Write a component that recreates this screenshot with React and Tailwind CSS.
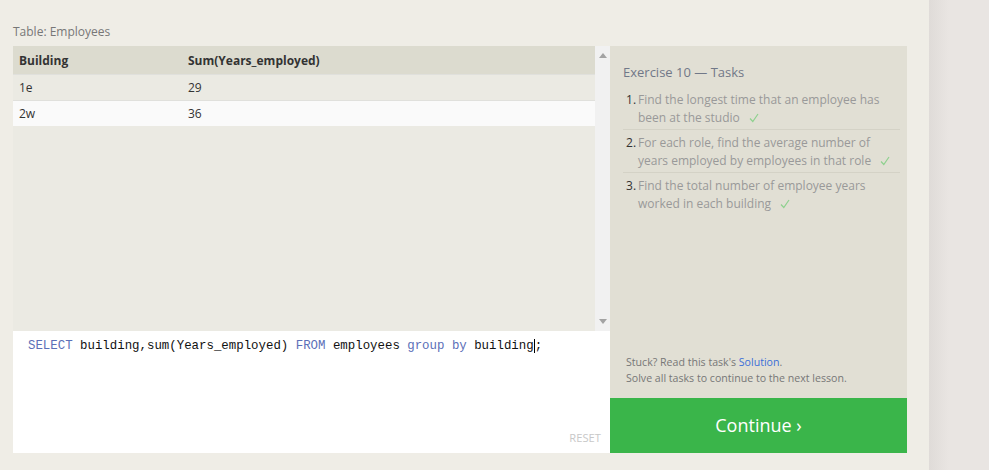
import React from 'react';

const rows = [
  { building: '1e', sum: 29, bg: 'bg-[#ebeae3]' },
  { building: '2w', sum: 36, bg: 'bg-[#fafafa]' },
];

const tasks = [
  'Find the longest time that an employee has been at the studio',
  'For each role, find the average number of years employed by employees in that role',
  'Find the total number of employee years worked in each building',
];

function Check() {
  return (
    <svg className="ml-[9px] inline-block align-[-1px]" width="10" height="10" viewBox="0 0 10 10">
      <path d="M1 5.5L3.8 8.5L9 1" fill="none" stroke="#8fd18f" strokeWidth="1.2" />
    </svg>
  );
}

export default function App() {
  return (
    <div className="flex min-h-[470px] w-full bg-[#efede6] font-['Open_Sans',sans-serif]">
      <div className="w-[929px] shrink-0 pl-[13px] pr-[22px]">
        <div className="pt-[23px] text-[12px] leading-[18px] text-[#777]">Table: Employees</div>
        <div className="mt-[5px] flex">
          {/* left column: results + editor */}
          <div className="flex w-[597px] flex-col">
            <div className="flex h-[285px] bg-[#ebeae3]">
              <div className="flex-1">
                <div className="flex h-[28px] items-center bg-[#dcdbcf] pt-[2px] text-[12px] font-bold text-[#333]">
                  <div className="w-[175px] pl-[6px]">Building</div>
                  <div>Sum(Years_employed)</div>
                </div>
                {rows.map(r => (
                  <div
                    key={r.building}
                    className={`flex h-[26px] items-center border-t border-[#e0e0dc] text-[12px] text-[#333] ${r.bg}`}
                  >
                    <div className="w-[175px] pl-[6px]">{r.building}</div>
                    <div>{r.sum}</div>
                  </div>
                ))}
              </div>
              <div className="flex w-[15px] flex-col items-center justify-between bg-[#f1f1f1] py-[7px]">
                <svg width="8" height="5" viewBox="0 0 8 5"><path d="M4 0L8 5H0z" fill="#a3a3a3" /></svg>
                <svg width="8" height="5" viewBox="0 0 8 5"><path d="M0 0H8L4 5z" fill="#a3a3a3" /></svg>
              </div>
            </div>
            <div className="relative h-[122px] bg-white pl-[15px] pt-[6px] font-['Liberation_Mono',monospace] text-[12.4px] leading-[18px]">
              <span className="text-[#5b6fb8]">SELECT</span>{' '}
              <span className="text-[#111]">building,sum(Years_employed)</span>{' '}
              <span className="text-[#5b6fb8]">FROM</span>{' '}
              <span className="text-[#111]">employees</span>{' '}
              <span className="text-[#5b6fb8]">group</span>{' '}
              <span className="text-[#5b6fb8]">by</span>{' '}
              <span className="text-[#111]">building</span>
              <span className="border-l border-black text-[#111]">;</span>
              <div className="absolute bottom-[8px] right-[9px] font-['Open_Sans',sans-serif] text-[11.2px] leading-[14px] text-[#c8c8c8]">
                RESET
              </div>
            </div>
          </div>

          {/* right column: tasks */}
          <div className="flex w-[297px] flex-col">
            <div className="flex h-[352px] flex-col bg-[#e1dfd4] pl-[13px] pr-[7px]">
              <div className="mt-[17px] text-[13px] leading-[18px] text-[#717888]">Exercise 10 — Tasks</div>
              <ol className="mt-[10px]">
                {tasks.map((t, i) => (
                  <li
                    key={i}
                    className={`flex text-[12px] leading-[18px] ${i < tasks.length - 1 ? 'border-b border-[#d4d2c6] pb-[2px]' : ''} ${i > 0 ? 'pt-[4px]' : ''}`}
                  >
                    <span className="w-[15px] shrink-0 pl-[3px] text-[#333]">{i + 1}.</span>
                    <span className="text-[#999]">
                      {t}
                      <Check />
                    </span>
                  </li>
                ))}
              </ol>
              <div className="mt-auto pb-[12px] pl-[3px] text-[10.6px] leading-[16px] text-[#777]">
                <div>
                  Stuck? Read this task's <span className="text-[#3b6fd8]">Solution</span>.
                </div>
                <div>Solve all tasks to continue to the next lesson.</div>
              </div>
            </div>
            <div className="flex h-[55px] items-center justify-center bg-[#3ab54a] text-[18px] text-white">
              Continue ›
            </div>
          </div>
        </div>
      </div>
      <div className="flex-1 bg-[linear-gradient(to_right,#dfdbd8,#e9e5e2_20px)]" />
    </div>
  );
}
